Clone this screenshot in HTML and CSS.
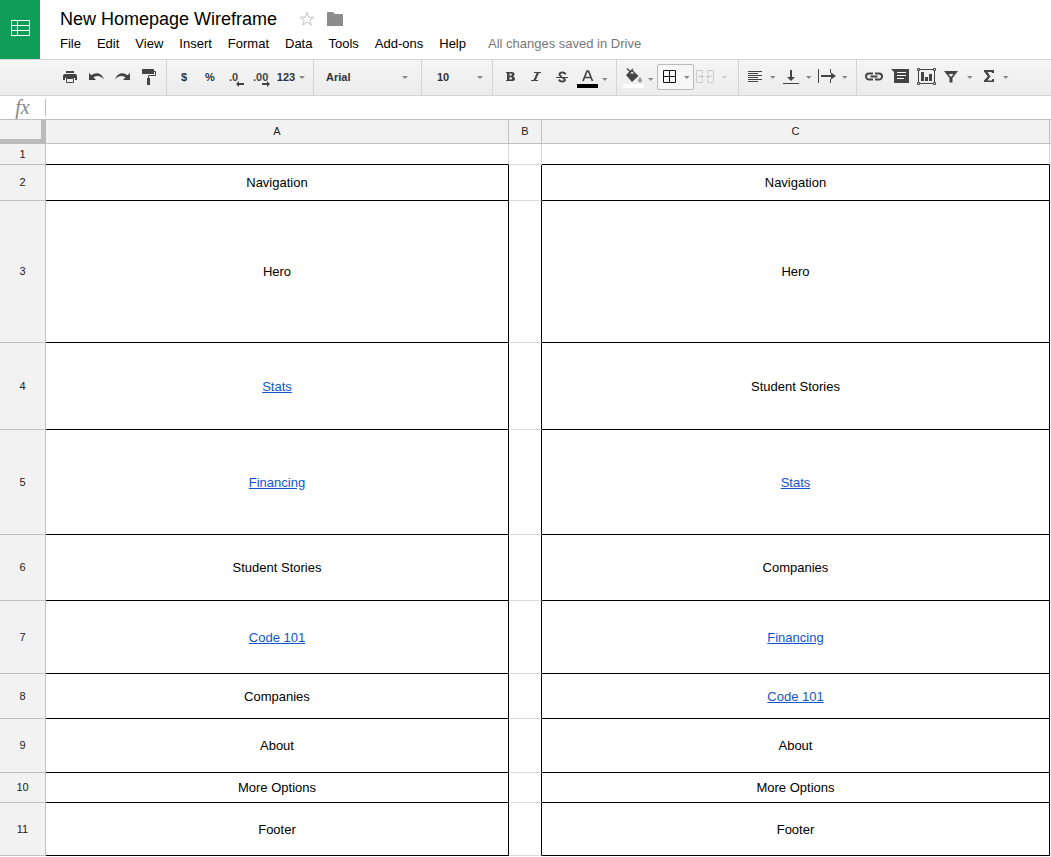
FILE: index.html
```html
<!DOCTYPE html>
<html lang="en">
<head>
<meta charset="utf-8">
<title>New Homepage Wireframe</title>
<link rel="stylesheet" href="styles.css">
</head>
<body>
<header class="header">
  <a class="logo" href="#" aria-label="Sheets home">
    <svg width="20" height="17" viewBox="0 0 20 17" fill="none" stroke="#fff"><path d="M.5 .5h18v15H.5zM.5 5.5h18M.5 10.500h18M6.500 .5v15"/></svg>
  </a>
  <div class="heading">
    <div class="title-row">
      <h1 class="title">New Homepage Wireframe</h1>
      <button class="plain star" aria-label="Star">
        <svg width="16" height="16" viewBox="0 0 16 16" fill="none" stroke="#c4c4c4"><path d="M8 1.500l1.700 4.700h5L10.700 9.200l1.500 4.900L8 11.200l-4.200 2.900 1.500-4.900-4-3h5z"/></svg>
      </button>
      <button class="plain" aria-label="Move to folder">
        <svg width="16" height="14" viewBox="0 0 16 14" fill="#8c8c8c"><path d="M0 1Q0 0 1 0H6l2 2h7Q16 2 16 3V14H0z"/></svg>
      </button>
    </div>
    <nav class="menus">
      <button class="plain">File</button>
      <button class="plain">Edit</button>
      <button class="plain">View</button>
      <button class="plain">Insert</button>
      <button class="plain">Format</button>
      <button class="plain">Data</button>
      <button class="plain">Tools</button>
      <button class="plain">Add-ons</button>
      <button class="plain">Help</button>
      <span class="status">All changes saved in Drive</span>
    </nav>
  </div>
</header>

<div class="toolbar" role="toolbar" aria-label="Formatting">
  <div class="group group-first">
    <button class="tool" aria-label="Print"><svg width="26" height="26" fill="#444"><path d="M9 7h8v2H9zM6 12q0-2 2-2h10q2 0 2 2v4h-2v-2H8v2H6z"/><path d="M9.500 14.500h7v4h-7z" fill="#f1f1f1" stroke="#444"/></svg></button>
    <button class="tool" aria-label="Undo"><svg width="26" height="26" fill="#444"><path d="M6 9l2.500 2.200C12 8 18.500 8 21 15.500 18 11.500 14 11 10.500 13.200L13 16H6z"/></svg></button>
    <button class="tool" aria-label="Redo"><svg width="26" height="26" fill="#444"><path d="M21 9l-2.500 2.200C15 8 8.500 8 6 15.500 9 11.500 13 11 16.500 13.200L14 16h7z"/></svg></button>
    <button class="tool" aria-label="Paint format"><svg width="26" height="26" fill="#444"><path d="M7 5h12v5H7zM12 14h3v7h-3z"/><path d="M19 7.500h1.500v4h-7V14" fill="none" stroke="#444"/></svg></button>
  </div>
  <div class="group">
    <button class="tool">$</button>
    <button class="tool">%</button>
    <button class="tool" aria-label="Decrease decimal places"><svg width="26" height="26" fill="#444"><text x="6" y="17">.0</text><path d="M13 20l3-3v2h5v2h-5v2z"/></svg></button>
    <button class="tool" aria-label="Increase decimal places"><svg width="26" height="26" fill="#444"><text x="4" y="17">.00</text><path d="M21 20l-3-3v2h-5v2h5v2z"/></svg></button>
    <button class="tool formats">123<svg class="caret" width="6" height="3"><path d="M0 0h6L3 3z"/></svg></button>
  </div>
  <div class="group">
    <label class="pick family"><select aria-label="Font"><option>Arial</option></select><svg class="caret" width="6" height="3"><path d="M0 0h6L3 3z"/></svg></label>
  </div>
  <div class="group">
    <label class="pick size"><select aria-label="Font size"><option>10</option></select><svg class="caret" width="6" height="3"><path d="M0 0h6L3 3z"/></svg></label>
  </div>
  <div class="group group-text">
    <button class="tool" aria-label="Bold"><svg width="26" height="26" fill="#444" fill-rule="evenodd"><path d="M9 8h5.500q3 0 3 2.300 0 1.500-1.300 2.200 1.800.5 1.800 2.400Q18 17 15 17H9v-1h1V9H9zM12.500 9.500v2.200h1.200q1.200 0 1.200-1.100T13.700 9.500zM12.500 13.200v2.300h1.300q1.300 0 1.300-1.100t-1.300-1.200z"/></svg></button>
    <button class="tool" aria-label="Italic"><svg width="26" height="26" fill="none" stroke="#444"><path d="M11 8.500h7M8 16.500h7"/><path d="M15 8.500L11.500 16.500" stroke-width="2"/></svg></button>
    <button class="tool" aria-label="Strikethrough"><svg width="26" height="26" fill="none" stroke="#444"><path d="M7 13.500h12"/><path d="M16.500 10.500Q16 8.500 13.300 8.500t-2.800 2Q10.500 12 13 12.600M13.500 14q2.500.6 2.500 1.700 0 1.800-2.800 1.800-2.700 0-3.200-2" stroke-width="1.800"/></svg></button>
    <button class="tool wide" aria-label="Text color"><svg width="36" height="26"><path d="M8 17l4-10h1.500l4 10" fill="none" stroke="#444" stroke-width="1.700"/><path d="M9.500 13.500h6.500" stroke="#444" stroke-width="1.500"/><path d="M2 20h21v4H2z"/><path class="arrow" d="M27 14h5.500L29.800 17z"/></svg></button>
  </div>
  <div class="group group-cell">
    <button class="tool wide" aria-label="Fill color"><svg width="36" height="26"><path d="M2 20h21v4H2z" fill="#fff"/><path d="M5 11l6-5.500 6.500 6.500-6.500 6z" fill="#444"/><path d="M6 4.500l6 6M7.500 9.500L12 5" fill="none" stroke="#444" stroke-width="1.300"/><path d="M9 9.500l2-2 2.500 2z" fill="#f1f1f1"/><path d="M19 13q2 2.600 2 3.500a2 2 0 0 1-4 0q0-1 2-3.500z" fill="#999"/><path class="arrow" d="M27 14h5.500L29.800 17z"/></svg></button>
    <button class="tool wide boxed" aria-label="Borders"><svg width="35" height="24"><path d="M5.500 5.500h12v12h-12zM5.500 11.500h12M11.500 5.500v12" fill="none" stroke="#111"/><path class="arrow" d="M26 11h5.500L28.800 14z"/></svg></button>
    <button class="tool wide faded" aria-label="Merge cells" disabled><svg width="36" height="26"><path d="M8.500 6.500h-6v12h6v-3M8.500 6.500v3M13.500 9.500v-3h6v12h-6v-3M4 12.500h5M13 12.500h5" fill="none" stroke="#ccc"/><path d="M7 10l3 2.500L7 15zM15 10l-3 2.500 3 2.500z" fill="#ccc"/><path class="arrow" d="M28 12h5L30.500 15z"/></svg></button>
  </div>
  <div class="group group-align">
    <button class="tool wide" aria-label="Horizontal align"><svg width="36" height="26"><path d="M5 7.500h14M5 9.500h10M5 11.500h14M5 13.500h10M5 15.500h14M5 17.500h10" stroke="#444"/><path class="arrow" d="M27 12h5.500L29.800 15z"/></svg></button>
    <button class="tool wide" aria-label="Vertical align"><svg width="36" height="26"><path d="M4 19.500h16" stroke="#444"/><path d="M11 6h2v7h3l-4 4-4-4h3z" fill="#444"/><path class="arrow" d="M27 12h5.500L29.800 15z"/></svg></button>
    <button class="tool wide" aria-label="Text wrapping"><svg width="36" height="26"><path d="M3.500 5v14M15.500 5v4M15.500 15v4" stroke="#444"/><path d="M6 12h10" stroke="#444" stroke-width="2"/><path d="M16 8.500l5 3.500-5 3.500z" fill="#444"/><path class="arrow" d="M27 12h5.500L29.800 15z"/></svg></button>
  </div>
  <div class="group group-last">
    <button class="tool" aria-label="Insert link"><svg width="26" height="26" fill="none" stroke="#444" stroke-width="2"><path d="M12 9.500H8a3 3 0 0 0 0 6h4M14 9.500h4a3 3 0 0 1 0 6h-4M9.500 12.500h7"/></svg></button>
    <button class="tool" aria-label="Insert comment"><svg width="26" height="26"><path d="M4 5h18v14H7V8z" fill="#444"/><path d="M10 8.500h9M10 11.500h9M10 14.500h7" stroke="#fff"/></svg></button>
    <button class="tool" aria-label="Insert chart"><svg width="26" height="26" fill="none" stroke="#444"><path d="M5.500 5.500h16v14h-16z"/><path d="M4.500 4.500h2v2h-2zM20.500 4.500h2v2h-2zM4.500 18.500h2v2h-2zM20.500 18.500h2v2h-2z" fill="#f1f1f1"/><path d="M8 8h3v9H8zM12 13h3v4h-3zM16 10h3v7h-3z" fill="#444" stroke="none"/></svg></button>
    <button class="tool wide" aria-label="Filter"><svg width="36" height="26"><path d="M5 7h14l-5.500 7v4.500h-3V14z" fill="#444"/><path d="M9.500 10h5L12 13z" fill="#f1f1f1"/><path class="arrow" d="M28 12h5.500L30.800 15z"/></svg></button>
    <button class="tool wide" aria-label="Functions"><svg width="36" height="26"><path d="M9 6h10v3h-2l-.5-1h-4l3 4.500-3.200 4h4.500l.7-1.500h1.500v3H9v-1.500l3.800-4L9 7.500z" fill="#444"/><path class="arrow" d="M28 12h5.500L30.800 15z"/></svg></button>
  </div>
</div>

<div class="formula">
  <label class="fx" for="formula-input">fx</label>
  <input id="formula-input" class="formula-input" type="text">
</div>

<main class="sheet">
<table class="grid">
  <colgroup><col class="col-head"><col class="col-a"><col class="col-b"><col><col class="col-rest"></colgroup>
  <thead>
    <tr><td class="corner"></td><th scope="col">A</th><th scope="col">B</th><th scope="col">C</th><th></th></tr>
  </thead>
  <tbody>
    <tr class="r1"><th scope="row">1</th><td></td><td></td><td></td><td></td></tr>
    <tr class="r2"><th scope="row">2</th><td>Navigation</td><td></td><td>Navigation</td><td></td></tr>
    <tr class="r3"><th scope="row">3</th><td>Hero</td><td></td><td>Hero</td><td></td></tr>
    <tr class="r4"><th scope="row">4</th><td><a href="#">Stats</a></td><td></td><td>Student Stories</td><td></td></tr>
    <tr class="r5"><th scope="row">5</th><td><a href="#">Financing</a></td><td></td><td><a href="#">Stats</a></td><td></td></tr>
    <tr class="r6"><th scope="row">6</th><td>Student Stories</td><td></td><td>Companies</td><td></td></tr>
    <tr class="r7"><th scope="row">7</th><td><a href="#">Code 101</a></td><td></td><td><a href="#">Financing</a></td><td></td></tr>
    <tr class="r8"><th scope="row">8</th><td>Companies</td><td></td><td><a href="#">Code 101</a></td><td></td></tr>
    <tr class="r9"><th scope="row">9</th><td>About</td><td></td><td>About</td><td></td></tr>
    <tr class="r10"><th scope="row">10</th><td>More Options</td><td></td><td>More Options</td><td></td></tr>
    <tr class="r11"><th scope="row">11</th><td>Footer</td><td></td><td>Footer</td><td></td></tr>
  </tbody>
</table>
</main>
</body>
</html>
```
FILE: styles.css
```css
* { box-sizing: border-box; }

body {
  margin: 0;
  background: #fff;
  color: #000;
  font: 13px/16px "Liberation Sans", Arial, sans-serif;
}

svg { display: block; flex: none; }

.plain,
.tool {
  margin: 0;
  padding: 0;
  border: 0;
  background: none;
  color: inherit;
  font: inherit;
}

/* Header */
.header { display: flex; height: 59px; }

.logo {
  display: flex;
  align-items: center;
  justify-content: center;
  width: 40px;
  padding: 0 0 3px 2px;
  background: #0f9d58;
}

.heading { flex: 1; padding: 8px 0 0 20px; }

.title-row { display: flex; align-items: center; height: 22px; }

.title { margin: 0; font-size: 18px; font-weight: 400; line-height: 22px; }

.star { margin: 0 12px 0 22px; }

.menus { display: flex; gap: 16px; padding-top: 6px; white-space: nowrap; }

.status { margin-left: 6px; color: #777; }

/* Toolbar */
.toolbar {
  display: flex;
  height: 37px;
  border-top: 1px solid #d5d5d5;
  border-bottom: 1px solid #d5d5d5;
  background: linear-gradient(#f5f5f5, #ececec);
  color: #333;
  font-size: 11px;
  font-weight: 700;
}

.group {
  display: flex;
  align-items: flex-start;
  padding: 4px 4px 0;
  border-right: 1px solid #d5d5d5;
}

.group-first { padding-left: 57px; padding-right: 5px; }
.group-text { padding-right: 5px; }
.group-cell { padding-right: 8px; }
.group-align { padding-right: 5px; }
.group-last { border-right: 0; }

.tool {
  display: flex;
  align-items: center;
  justify-content: center;
  width: 26px;
  height: 26px;
}

.wide { width: 36px; }

.boxed {
  width: 37px;
  border: 1px solid #bbb;
  border-radius: 2px;
  background: #f7f7f7;
}

.formats { width: 34px; gap: 4px; padding-right: 2px; }

.caret,
.arrow { fill: #888; }

.faded .arrow { fill: #ccc; }

.pick { display: flex; align-items: center; height: 26px; }

.pick select {
  flex: 1;
  min-width: 0;
  padding: 0;
  border: 0;
  appearance: none;
  background: none;
  color: inherit;
  font: inherit;
}

.family { width: 99px; padding: 0 9px 0 8px; }
.size { width: 62px; padding: 0 5px 0 11px; }

/* Formula bar */
.formula { display: flex; align-items: center; height: 23px; }

.fx {
  width: 45px;
  padding-bottom: 2px;
  text-align: center;
  color: #888;
  font: italic 400 20px/20px "Liberation Serif", "Times New Roman", serif;
}

.formula-input {
  flex: 1;
  height: 17px;
  padding: 0 4px;
  border: 0;
  border-left: 1px solid #c0c0c0;
  outline: 0;
  font: inherit;
}

/* Spreadsheet */
.sheet { border-top: 1px solid #c0c0c0; }

.grid {
  width: 100%;
  table-layout: fixed;
  border-collapse: separate;
  border-spacing: 0;
}

.col-head { width: 46px; }
.col-a { width: 44.05%; }
.col-b { width: 33px; }
.col-rest { width: 1px; }

.grid th,
.grid td {
  padding: 1px 0 0;
  border: 0 solid #d9d9d9;
  border-width: 0 1px 1px 0;
  text-align: center;
  vertical-align: middle;
}

.grid th {
  padding: 0 0 1px;
  border-color: #c0c0c0;
  background: #f2f2f2;
  color: #222;
  font-size: 11px;
  font-weight: 400;
}

.grid thead tr { height: 24px; }

.grid .corner {
  border: solid #bbb;
  border-width: 0 5px 5px 0;
  background: #f2f2f2;
}

.grid tr > :last-child { border-right: 0; }

.grid tbody td:nth-child(2),
.grid tbody td:nth-child(4) { border-color: #000; }

.grid tbody tr:not(.r1) td:nth-child(3) { border-right-color: #000; }

.grid .r1 td:nth-child(2),
.grid .r1 td:nth-child(4) { border-right-color: #d9d9d9; }

.grid a { color: #15c; text-decoration: underline; }

.r1 { height: 21px; }
.r2 { height: 36px; }
.r3 { height: 142px; }
.r4 { height: 87px; }
.r5 { height: 105px; }
.r6 { height: 66px; }
.r7 { height: 73px; }
.r8 { height: 45px; }
.r9 { height: 54px; }
.r10 { height: 30px; }
.r11 { height: 53px; }
```
